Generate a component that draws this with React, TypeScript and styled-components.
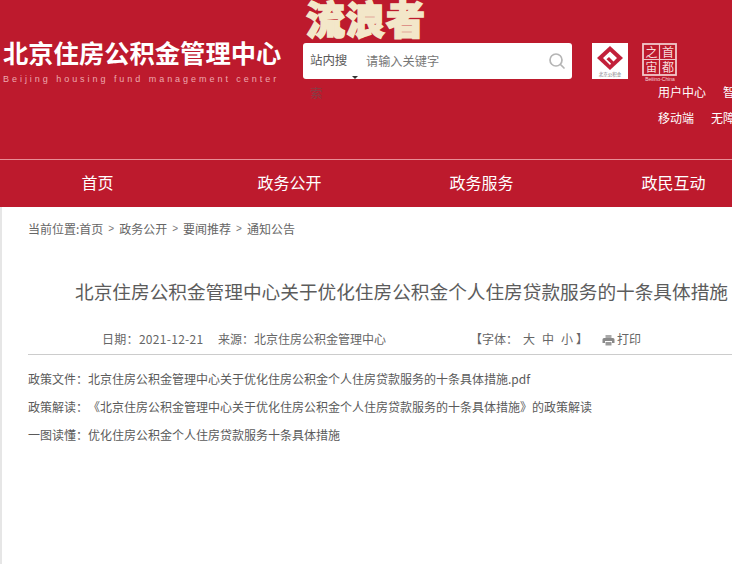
import React from "react";
import styled, { createGlobalStyle } from "styled-components";

const Global = createGlobalStyle`
  html, body { margin: 0; padding: 0; background: #fff; }
  body { width: 732px; height: 564px; overflow: hidden; font-family: "Noto Sans CJK SC", "Liberation Sans", sans-serif; }
`;
const Page = styled.div`width: 732px; height: 564px; overflow: hidden; background: #fff;`;
const Header = styled.header`
  height: 159px; background: #bd1a2d; display: flex; position: relative; box-sizing: border-box; padding-top: 43px;
`;
const Watermark = styled.div`
  position: absolute; left: 306px; top: -8px; font-size: 39px; line-height: 50px; font-weight: 900; letter-spacing: 1px;
  color: #f3e7c9; -webkit-text-stroke: 1.6px #f3e7c9; white-space: nowrap;
`;
const Brand = styled.div`width: 303px; flex: none; padding-left: 3px; box-sizing: border-box; color: #fff;`;
const BrandName = styled.div`font-size: 25.3px; line-height: 24px; font-weight: 700; margin-top: -3px; white-space: nowrap;`;
const BrandSub = styled.div`
  font-family: "Liberation Sans", sans-serif; font-size: 9px; line-height: 12px; margin-top: 9px; letter-spacing: 2.96px;
  color: #eda8ae; white-space: nowrap;
`;
const Search = styled.div`
  width: 269px; height: 36px; flex: none; background: #fff; border-radius: 3px; display: flex; position: relative; color: #666;
`;
const Scope = styled.div`
  width: 40px; padding-left: 7px; flex: none; font-size: 12.5px; line-height: 33px; color: #5a5a5a; word-break: break-all;
  letter-spacing: -.1px;
`;
const ScopeLast = styled.span`opacity: .55;`;
const Caret = styled.span`
  position: absolute; left: 49px; top: 33px; width: 0; height: 0;
  border-left: 3px solid transparent; border-right: 3px solid transparent; border-top: 3px solid #333;
`;
const Placeholder = styled.div`margin-left: 16px; font-size: 12.2px; line-height: 36px; color: #777; flex: 1;`;
const SearchIcon = styled.svg`width: 18px; height: 18px; margin: 9px 6px 0 0; flex: none;`;
const Side = styled.div`margin-left: 20px; width: 140px; flex: none;`;
const Logos = styled.div`display: flex; gap: 14px;`;
const LogoBox = styled.svg`width: 36px; height: 36px; flex: none; display: block;`;
const CapitalLogo = styled.svg`width: 36px; height: 38px; flex: none; display: block;`;
const LinksOverlay = styled.div`position: absolute; left: 658px; top: 79px;`;
const LinkRow = styled.div`display: flex; white-space: nowrap; color: #fff; font-size: 12px; line-height: 26px;`;
const TopLink = styled.span<{ $gap: number }>`margin-right: ${(p) => p.$gap}px; flex: none;`;
const Nav = styled.nav`
  height: 47px; background: #bd1a2d; border-top: 1px solid #e88d95; display: flex; color: #fff; width: 770px; padding-left: 1.5px;
`;
const NavItem = styled.div`width: 192px; flex: none; text-align: center; font-size: 16px; line-height: 45px;`;
const Main = styled.main`padding: 0 0 0 28px; color: #555; font-size: 12px; position: relative;`;
const Edge = styled.div`position: absolute; left: 0; top: 0; width: 2px; height: 357px; background: #e6e6e6;`;
const Crumbs = styled.div`padding-top: 13px; line-height: 18px; color: #666; display: flex; gap: 5px; font-size: 12px;`;
const Sep = styled.span`font-family: "Liberation Sans", sans-serif; color: #777; font-size: 10px;`;
const Title = styled.h1`
  margin: 39px 0 0 47px; font-size: 18.66px; line-height: 28px; font-weight: 400; color: #5c5c5c; white-space: nowrap;
`;
const Meta = styled.div`
  margin-top: 23px; width: 704px; height: 27px; box-sizing: border-box; border-bottom: 1px solid #ccc; padding-left: 74px;
  display: flex; line-height: 22px; color: #666; white-space: nowrap;
`;
const DateText = styled.span`width: 116px; flex: none; letter-spacing: .3px;`;
const Source = styled.span`width: 252px; flex: none;`;
const FontSizes = styled.span`width: 132px; flex: none; display: flex;`;
const FontLabel = styled.span`width: 53px; flex: none;`;
const FontOption = styled.span`width: 19px; flex: none;`;
const FontClose = styled.span`margin-left: -4px;`;
const Print = styled.span`display: flex; align-items: flex-start; gap: 2px; height: 22px;`;
const PrintIcon = styled.svg`width: 13px; height: 12px; margin-top: 6px;`;
const Rows = styled.div`padding-top: 10px; display: flex; flex-direction: column;`;
const Row = styled.div`line-height: 28px; white-space: nowrap; color: #5a5a5a; text-spacing-trim: space-all;`;

const crumbs = ["当前位置:首页", "政务公开", "要闻推荐", "通知公告"];

export default function App() {
  return (
    <Page>
      <Global />
      <Header>
        <Watermark>流浪者</Watermark>
        <Brand>
          <BrandName>北京住房公积金管理中心</BrandName>
          <BrandSub>Beijing housing fund management center</BrandSub>
        </Brand>
        <Search>
          <Scope>站内搜<ScopeLast>索</ScopeLast></Scope>
          <Caret />
          <Placeholder>请输入关键字</Placeholder>
          <SearchIcon viewBox="0 0 18 18" fill="none" stroke="#b5b5b5" strokeWidth="1.7">
            <circle cx="8" cy="8" r="6" />
            <path d="M12.500 12.500 16 16" strokeLinecap="round" />
          </SearchIcon>
        </Search>
        <Side>
          <Logos>
            <LogoBox viewBox="0 0 36 36">
              <rect width="36" height="36" fill="#fff" />
              <path d="M18 3 31 15 18 27 5 15Z" fill="#c2203a" />
              <path d="M18 8.500 25 15 21.500 18.400 17 14 14.500 16.300 19 20.600 18 22 11 15Z" fill="#fff" />
              <text x="18" y="32.500" textAnchor="middle" fontSize="4.500" fill="#777">北京公积金</text>
            </LogoBox>
            <CapitalLogo viewBox="0 0 36 38">
              <rect x="1" y="1" width="33" height="31" fill="#bd1a2d" stroke="#f1c8ca" strokeWidth="1.800" />
              <path d="M17.500 1V32M1 16.500H34" stroke="#f1c8ca" strokeWidth="1.200" />
              <text x="9.500" y="13.500" textAnchor="middle" fontSize="12" fill="#f7dcdc">之</text>
              <text x="26" y="13.500" textAnchor="middle" fontSize="12" fill="#f7dcdc">首</text>
              <text x="9.500" y="28.500" textAnchor="middle" fontSize="12" fill="#f7dcdc">宙</text>
              <text x="26" y="28.500" textAnchor="middle" fontSize="12" fill="#f7dcdc">都</text>
              <text x="18" y="37.500" textAnchor="middle" fontSize="5" fill="#f6d6d8" fontFamily="Liberation Sans">Beijing-China</text>
            </CapitalLogo>
          </Logos>
        </Side>
        <LinksOverlay>
          <LinkRow>
            <TopLink $gap={17}>用户中心</TopLink>
            <TopLink $gap={0}>智能问答</TopLink>
          </LinkRow>
          <LinkRow>
            <TopLink $gap={17}>移动端</TopLink>
            <TopLink $gap={0}>无障碍</TopLink>
          </LinkRow>
        </LinksOverlay>
      </Header>
      <Nav>
        <NavItem>首页</NavItem>
        <NavItem>政务公开</NavItem>
        <NavItem>政务服务</NavItem>
        <NavItem>政民互动</NavItem>
      </Nav>
      <Main>
        <Edge />
        <Crumbs>
          {crumbs.map((c, i) => (
            <React.Fragment key={c}>
              {i > 0 && <Sep>&gt;</Sep>}
              <span>{c}</span>
            </React.Fragment>
          ))}
        </Crumbs>
        <Title>北京住房公积金管理中心关于优化住房公积金个人住房贷款服务的十条具体措施</Title>
        <Meta>
          <DateText>日期：2021-12-21</DateText>
          <Source>来源：北京住房公积金管理中心</Source>
          <FontSizes>
            <FontLabel>【字体：</FontLabel>
            <FontOption>大</FontOption>
            <FontOption>中</FontOption>
            <FontOption>小</FontOption>
            <FontClose>】</FontClose>
          </FontSizes>
          <Print>
            <PrintIcon viewBox="0 0 13 12">
              <path d="M3.500 1h6v3h-6z" fill="#aaa" />
              <path d="M2 4h9a1.500 1.500 0 0 1 1.500 1.500V9H10V7H3v2H.5V5.500A1.500 1.500 0 0 1 2 4z" fill="#8a8a8a" />
              <path d="M3.500 8h6v3.500h-6z" fill="#999" />
            </PrintIcon>
            打印
          </Print>
        </Meta>
        <Rows>
          <Row>政策文件：北京住房公积金管理中心关于优化住房公积金个人住房贷款服务的十条具体措施.pdf</Row>
          <Row>政策解读：《北京住房公积金管理中心关于优化住房公积金个人住房贷款服务的十条具体措施》的政策解读</Row>
          <Row>一图读懂：优化住房公积金个人住房贷款服务十条具体措施</Row>
        </Rows>
      </Main>
    </Page>
  );
}
